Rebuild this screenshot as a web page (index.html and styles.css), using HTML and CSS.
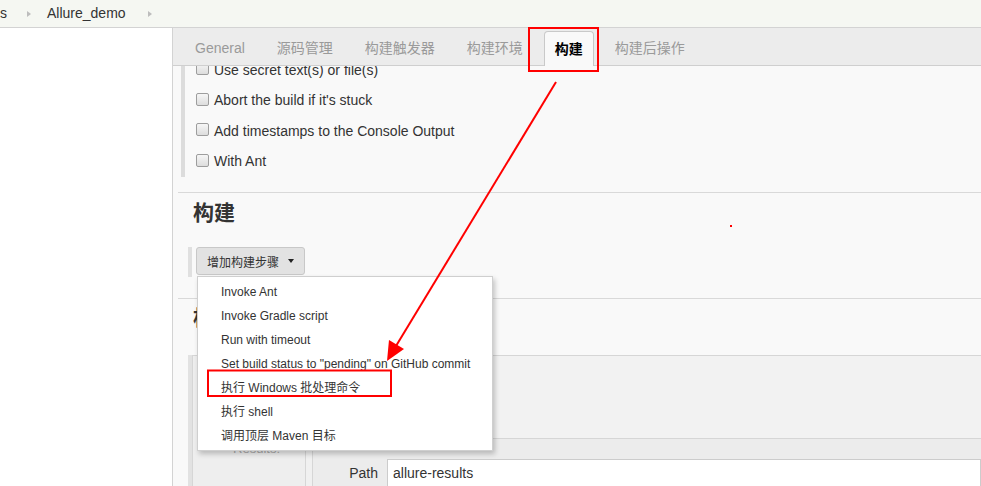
FILE: index.html
```html
<!DOCTYPE html>
<html lang="zh">
<head>
<meta charset="utf-8">
<title>Allure_demo 配置</title>
<link rel="stylesheet" href="styles.css">
</head>
<body>
<div class="topbar">
  <span class="crumb">s</span>
  <span class="sep"></span>
  <span class="crumb">Allure_demo</span>
  <span class="sep"></span>
</div>
<div class="layout">
  <aside class="sidebar"></aside>
  <main class="main">
    <nav class="tabs">
      <span class="tab">General</span>
      <span class="tab">源码管理</span>
      <span class="tab">构建触发器</span>
      <span class="tab">构建环境</span>
      <span class="tab active">构建</span>
      <span class="tab">构建后操作</span>
    </nav>
    <div class="content">
      <div class="env">
        <label class="row"><span class="cb"></span>Use secret text(s) or file(s)</label>
        <label class="row"><span class="cb"></span>Abort the build if it's stuck</label>
        <label class="row"><span class="cb"></span>Add timestamps to the Console Output</label>
        <label class="row"><span class="cb"></span>With Ant</label>
      </div>
      <section class="sec sec-build">
        <h2 class="sec-title">构建</h2>
        <div class="btnrow">
          <button class="btn">增加构建步骤<span class="caret"></span></button>
          <ul class="menu">
            <li>Invoke Ant</li>
            <li>Invoke Gradle script</li>
            <li>Run with timeout</li>
            <li>Set build status to "pending" on GitHub commit</li>
            <li>执行 Windows 批处理命令</li>
            <li>执行 shell</li>
            <li>调用顶层 Maven 目标</li>
          </ul>
        </div>
      </section>
      <section class="sec sec-post">
        <h2 class="sec-title">构建后操作</h2>
        <div class="step">
          <div class="step-inner">
            <div class="lcol"><span class="results">Results:</span></div>
            <div class="mcol"></div>
            <div class="rcol">
              <div class="r1"></div>
              <div class="r2"></div>
              <div class="pathrow">
                <span class="plabel">Path</span>
                <span class="pinput">allure-results</span>
              </div>
            </div>
          </div>
        </div>
      </section>
    </div>
  </main>
</div>
<svg class="annot" width="981" height="486" viewBox="0 0 981 486">
  <rect x="529" y="28" width="69" height="43" fill="none" stroke="#ff0000" stroke-width="2"/>
  <rect x="208" y="370.5" width="183" height="25.5" fill="none" stroke="#ff0000" stroke-width="2"/>
  <line x1="556" y1="82" x2="396" y2="346" stroke="#ff0000" stroke-width="2"/>
  <polygon points="387,361 404,349 389,340" fill="#ff0000"/>
  <rect x="730" y="225" width="2" height="2" fill="#ff0000"/>
</svg>
</body>
</html>
```
FILE: styles.css
```css
* { box-sizing: border-box; }
html, body { margin: 0; padding: 0; }
body {
  width: 981px;
  height: 486px;
  overflow: hidden;
  position: relative;
  font-family: "Liberation Sans", "Noto Sans CJK SC", sans-serif;
  font-size: 14px;
  color: #333;
  background: #fff;
}
.topbar {
  height: 28px;
  background: #f5f7f2;
  border-bottom: 1px solid #d3d3d3;
  display: flex;
  align-items: center;
}
.crumb { line-height: 27px; color: #333; }
.sep {
  width: 0; height: 0;
  border-left: 4px solid #bdbdbd;
  border-top: 3px solid transparent;
  border-bottom: 3px solid transparent;
  margin-left: 20px;
  margin-right: 16px;
}
.sep:last-child { margin-left: 22px; }
.layout {
  display: flex;
  height: 458px;
}
.sidebar {
  width: 173px;
  flex: none;
  background: #fff;
  border-right: 1px solid #d3d3d3;
}
.main {
  flex: 1;
  display: flex;
  flex-direction: column;
  background: #f9f9f9;
  overflow: hidden;
  min-width: 0;
}
.tabs {
  flex: none;
  height: 38px;
  background: #ececec;
  border-bottom: 1px solid #cfcfcf;
  display: flex;
  align-items: flex-end;
  gap: 10px;
  padding-left: 11px;
}
.tab {
  height: 34px;
  line-height: 34px;
  padding: 0 11px;
  color: #9a9a9a;
  white-space: nowrap;
  position: relative;
  top: 0;
}
.tab.active {
  top: 1px;
  height: 35px;
  line-height: 34px;
  background: #f9f9f9;
  color: #000;
  font-weight: bold;
  border: 1px solid #c9c9c9;
  border-bottom: none;
  border-radius: 4px 4px 0 0;
  padding: 0 10px;
}
.content {
  flex: 1;
  overflow: hidden;
  padding-left: 5px;
}
.env {
  margin-top: -12px;
  margin-left: 3px;
  border-left: 4px solid #dcdcdc;
  padding: 0 0 1px 11px;
  margin-bottom: 15px;
}
.row {
  display: flex;
  align-items: center;
  height: 30.5px;
  color: #333;
  padding-top: 1px;
}
.cb {
  width: 13px;
  height: 13px;
  border: 1px solid #9d9d9d;
  border-radius: 2px;
  background: linear-gradient(#f6f6f6, #dddddd);
  margin-right: 5px;
  flex: none;
  position: relative;
  top: -1px;
}
.sec {
  border-top: 1px solid #d9d9d9;
}
.sec-title {
  margin: 0;
  padding-left: 15px;
  font-size: 21px;
  line-height: 28px;
  font-weight: bold;
  color: #333;
}
.sec-build { padding: 6px 0 21px; }
.btnrow {
  position: relative;
  margin: 20px 0 0 10px;
  border-left: 4px solid #e0e0e0;
  height: 30px;
  padding-left: 4px;
}
.btn {
  height: 28px;
  width: 109px;
  border: 1px solid #c8c8c8;
  border-radius: 3px;
  background: #e2e2e2;
  font-family: inherit;
  font-size: 12px;
  color: #333;
  padding: 0 0 0 10px;
  display: flex;
  align-items: center;
  text-align: left;
}
.caret {
  width: 0; height: 0;
  border-top: 4px solid #222;
  border-left: 3.5px solid transparent;
  border-right: 3.5px solid transparent;
  margin-left: 9px;
}
.menu {
  position: absolute;
  z-index: 5;
  left: 5px;
  top: 29px;
  width: 296px;
  height: 175px;
  margin: 0;
  padding: 3px 0 0;
  list-style: none;
  background: #fff;
  border: 1px solid #cfcfcf;
  box-shadow: 2px 3px 5px rgba(0, 0, 0, 0.22);
}
.menu li {
  height: 24px;
  line-height: 24px;
  padding-left: 23px;
  font-size: 12px;
  color: #333;
  white-space: nowrap;
}
.sec-post { padding-top: 5px; }
.step {
  margin: 23px 0 0 10px;
  border-left: 4px solid #e2e2e2;
}
.step-inner {
  display: grid;
  grid-template-columns: 112px 8px 1fr;
  border-top: 1px solid #d6d6d6;
  border-left: 1px solid #d6d6d6;
  height: 140px;
}
.lcol {
  background: #eeeeee;
  padding-top: 84px;
  text-align: right;
  padding-right: 25px;
}
.results { font-size: 13px; color: #aaa; }
.mcol {
  border-left: 1px solid #d6d6d6;
  border-right: 1px solid #d6d6d6;
  background: #f0f0f0;
}
.rcol { background: #f2f2f2; }
.r1 {
  height: 83px;
  border-bottom: 1px solid #d6d6d6;
}
.r2 {
  height: 20px;
  background: #ececec;
}
.pathrow {
  display: flex;
  height: 30px;
  background: #ececec;
}
.plabel {
  width: 74px;
  text-align: right;
  padding-right: 9px;
  line-height: 29px;
  color: #333;
}
.pinput {
  flex: 1;
  height: 30px;
  background: #fff;
  border: 1px solid #cccccc;
  padding-left: 5px;
  line-height: 27px;
  color: #333;
}
.annot {
  position: absolute;
  left: 0;
  top: 0;
  pointer-events: none;
  z-index: 10;
}
```
